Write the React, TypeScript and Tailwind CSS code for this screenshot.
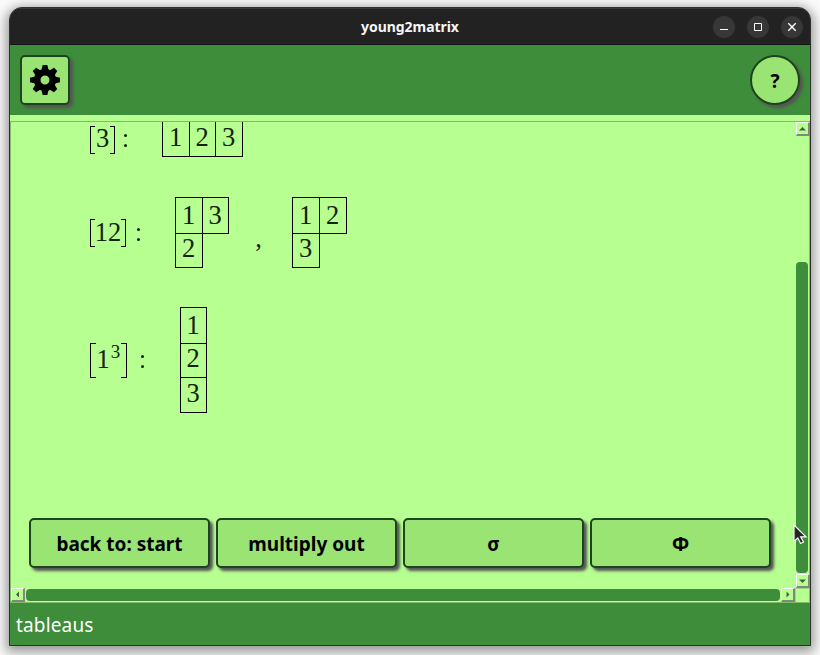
import React from "react";

const digit = "flex justify-center font-['Liberation_Serif',serif] text-[26.5px] leading-[26px] text-[#14230d]";

/** One box of a Young tableau. */
function Cell({ n, size, edges }: { n: string; size: string; edges: string }) {
  return <div className={`${digit} shrink-0 border-black pr-px ${size} ${edges}`}>{n}</div>;
}

function Bracket({ right, tall }: { right?: boolean; tall?: boolean }) {
  return (
    <span
      className={`block shrink-0 border-y border-black ${right ? "border-r" : "border-l"} ${
        tall ? "h-[35px] w-[6px]" : "h-[28px] w-[5px]"
      }`}
    />
  );
}

function Colon() {
  return (
    <span className="flex h-[13px] w-[3px] shrink-0 flex-col justify-between">
      <i className="block h-[3px] w-[3px] rounded-full bg-[#14230d]" />
      <i className="block h-[3px] w-[3px] rounded-full bg-[#14230d]" />
    </span>
  );
}

function WindowButton({ children }: { children: React.ReactNode }) {
  return (
    <span className="flex h-[22px] w-[22px] items-center justify-center rounded-full bg-[#373737]">
      <svg width="22" height="22" viewBox="0 0 22 22" fill="none" stroke="#fff">
        {children}
      </svg>
    </span>
  );
}

function ScrollArrow({ d }: { d: string }) {
  return (
    <span className="block h-[14px] w-[14px] shrink-0 border-t border-r-2 border-b-2 border-l border-t-white border-r-[#7f8a7c] border-b-[#7f8a7c] border-l-white bg-[#b6ff90]">
      <svg width="11" height="11" viewBox="0 0 11 11" className="block">
        <path d={d} fill="#46613c" />
      </svg>
    </span>
  );
}

const raised = "border-2 border-[#1d451d] bg-[#99e472] shadow-[3px_3px_3px_#555]";

function ActionButton({ children }: { children: React.ReactNode }) {
  return (
    <button
      className={`flex h-[50px] w-[181px] shrink-0 items-center justify-center rounded-[5px] pt-[3px] font-['Noto_Sans',sans-serif] text-[19px] font-bold text-black ${raised}`}
    >
      {children}
    </button>
  );
}

export default function App() {
  return (
    <div className="relative h-[655px] w-[820px] overflow-hidden bg-[#fafafa] pt-[7px] pl-[9px]">
      <div className="flex h-[639px] w-[802px] flex-col overflow-hidden rounded-t-[13px] border border-[#303030] bg-[#3d8d3b] shadow-[0_3px_12px_3px_rgba(0,0,0,0.4)]">
        <header className="flex h-[37px] shrink-0 items-center border-t border-b border-t-[#383838] border-b-[#151515] bg-[#222] pr-[7px] pl-[94px]">
          <div className="flex-1 pl-[3px] text-center font-['Noto_Sans',sans-serif] text-[14px] font-bold text-[#f6f6f6]">
            <span className="tracking-[-0.05px]">young2matrix</span>
          </div>
          <div className="flex gap-[12px]">
            <WindowButton>
              <path d="M7 13.5H15" />
            </WindowButton>
            <WindowButton>
              <path d="M7.5 7.5H14.5V14.5H7.5Z" />
            </WindowButton>
            <WindowButton>
              <path d="M7.3 7.3L14.7 14.7M14.7 7.3L7.3 14.7" strokeWidth="1.4" />
            </WindowButton>
          </div>
        </header>

        <nav className="flex h-[70px] shrink-0 items-start justify-between bg-[#3d8d3b] px-[10px] pt-[10px]">
          <button className={`flex h-[50px] w-[50px] items-center justify-center rounded-[5px] ${raised}`}>
            <svg width="30" height="30" viewBox="-15 -15 30 30">
              <circle r="7.8" fill="none" stroke="#000" strokeWidth="6.6" />
              {[0, 45, 90, 135, 180, 225, 270, 315].map((a) => (
                <path key={a} d="M-3.8 -9L-2.3 -15H2.3L3.8 -9Z" transform={`rotate(${a})`} />
              ))}
            </svg>
          </button>
          <button
            className={`flex h-[50px] w-[50px] items-center justify-center rounded-full pt-[2px] font-['Noto_Sans',sans-serif] text-[19px] font-bold text-black ${raised}`}
          >
            ?
          </button>
        </nav>

        <main className="flex h-[488px] shrink-0 flex-col bg-[#b6ff90] pt-[6px]">
          <div className="flex h-[482px] flex-col border border-[#82ba66]">
            <div className="flex h-[466px] shrink-0">
              <section className="h-[466px] w-[785px] shrink-0 overflow-hidden">
                <div className="flex h-[35px] items-start pl-[79px]">
                  <div className="flex w-[72px] items-center pt-[3px]">
                    <Bracket />
                    <span className={`${digit} w-[15px] pb-[3px]`}>3</span>
                    <Bracket right />
                    <span className="ml-[9px] flex pt-[2px]">
                      <Colon />
                    </span>
                  </div>
                  <Cell n="1" size="h-[35px] w-[28px] pt-[2px]" edges="border-x border-b" />
                  <Cell n="2" size="h-[35px] w-[26px] pt-[2px]" edges="border-r border-b" />
                  <Cell n="3" size="h-[35px] w-[27px] pt-[2px]" edges="border-r border-b" />
                </div>

                <div className="mt-[40px] flex h-[71px] pl-[79px]">
                  <div className="mt-[22px] flex h-[28px] w-[85px] items-center">
                    <Bracket />
                    <span className={`${digit} w-[26px] pb-[3px]`}>12</span>
                    <Bracket right />
                    <span className="ml-[11px] flex pt-[2px]">
                      <Colon />
                    </span>
                  </div>
                  <div className="w-[55px]">
                    <div className="flex">
                      <Cell n="1" size="h-[37px] w-[28px] pt-[4px]" edges="border" />
                      <Cell n="3" size="h-[37px] w-[26px] pt-[4px]" edges="border-y border-r" />
                    </div>
                    <Cell n="2" size="h-[34px] w-[28px] pt-[1px]" edges="border-x border-b" />
                  </div>
                  <span className={`${digit} w-[57px] pt-[28px]`}>,</span>
                  <div className="ml-[5px] w-[56px]">
                    <div className="flex">
                      <Cell n="1" size="h-[37px] w-[28px] pt-[4px]" edges="border" />
                      <Cell n="2" size="h-[37px] w-[27px] pt-[4px]" edges="border-y border-r" />
                    </div>
                    <Cell n="3" size="h-[34px] w-[28px] pt-[1px]" edges="border-x border-b" />
                  </div>
                </div>

                <div className="mt-[39px] flex h-[106px] items-center pl-[79px]">
                  <div className="flex w-[90px] items-center">
                    <Bracket tall />
                    <span className={`${digit} w-[14px] pb-[3px]`}>1</span>
                    <sup className="static flex w-[11px] justify-center pb-[16px] font-['Liberation_Serif',serif] text-[19px] leading-[18px] text-[#14230d]">
                      3
                    </sup>
                    <Bracket right tall />
                    <span className="ml-[14px] flex pt-[3px]">
                      <Colon />
                    </span>
                  </div>
                  <div>
                    <Cell n="1" size="h-[37px] w-[27px] pt-[4px]" edges="border" />
                    <Cell n="2" size="h-[34px] w-[27px] pt-[1px]" edges="border-x border-b" />
                    <Cell n="3" size="h-[35px] w-[27px] pt-[2px]" edges="border-x border-b" />
                  </div>
                </div>

                <div className="mt-[105px] flex gap-[6px] pl-[18px]">
                  <ActionButton>
                    <span>back to: start</span>
                  </ActionButton>
                  <ActionButton>
                    <span>multiply out</span>
                  </ActionButton>
                  <ActionButton>σ</ActionButton>
                  <ActionButton>Φ</ActionButton>
                </div>
              </section>

              <div className="flex h-[466px] w-[13px] flex-col">
                <ScrollArrow d="M2 7.5L5.5 4L9 7.5Z" />
                <div className="mt-[126px] h-[311px] w-[12px] shrink-0 rounded-[4px] bg-[#3d8d3b]" />
                <div className="mt-[1px]">
                  <ScrollArrow d="M2 4.5L5.5 8L9 4.5Z" />
                </div>
              </div>
            </div>

            <div className="flex h-[14px] items-center">
              <ScrollArrow d="M7 2.5L4 5.5L7 8.5Z" />
              <div className="mx-[1px] h-[12px] w-[754px] shrink-0 rounded-[4px] bg-[#3d8d3b]" />
              <ScrollArrow d="M4.5 2.5L7.5 5.5L4.5 8.5Z" />
              <span className="h-[14px] flex-1 border-t border-l border-[#a0d583]" />
            </div>
          </div>
        </main>

        <footer className="flex flex-1 items-center pt-[2px] pl-[6px] font-['Noto_Sans',sans-serif] text-[19px] text-white">
          <span className="tracking-[0.15px]">tableaus</span>
        </footer>
      </div>

      <svg className="absolute top-[523px] left-[792px]" width="16" height="24" viewBox="0 0 16 24">
        <path d="M2 2V18.5L5.8 15L8.6 20.5L11.5 19L8.7 13.8H14Z" fill="#252525" stroke="#fff" strokeWidth="1.2" />
      </svg>
    </div>
  );
}
